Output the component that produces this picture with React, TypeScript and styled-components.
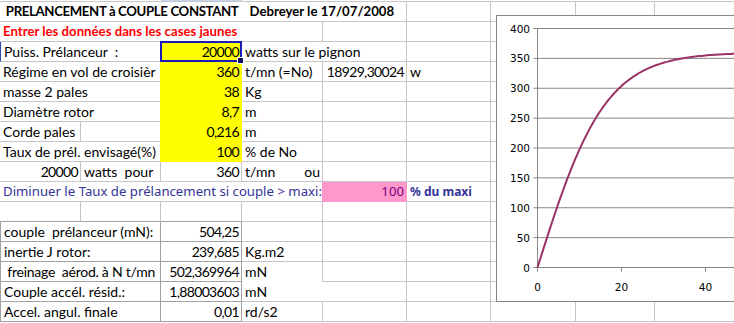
import React from 'react';
import styled, {createGlobalStyle} from 'styled-components';

const GRID = '#c6c6c6';
const FRAME = '#a2a2a2';
const YELLOW = '#ffff00';
const PINK = '#ff99cc';
const SELECT = '#1a1ab8';

const GlobalStyle = createGlobalStyle`
  html, body {
    margin: 0;
    padding: 0;
    background: #fff;
    overflow: hidden;
  }
`;

const Page = styled.div`
  position: relative;
  width: 734px;
  height: 323px;
  overflow: hidden;
  background: #fff;
  font-family: Lato, 'Liberation Sans', sans-serif;
`;

const COLUMNS = '81px 80px 81px 81px 84px 84px 85px 79px 85px';

const HeaderEdge = styled.div`
  display: grid;
  grid-template-columns: ${COLUMNS};
  height: 1px;
  width: 760px;
`;

const HeaderBit = styled.div<{$active?: boolean}>`
  background: ${p => (p.$active ? '#c4d4ec' : '#fff')};
`;

const Sheet = styled.div`
  border-top: 1px solid ${GRID};
  width: 760px;
`;

const Row = styled.div`
  display: grid;
  grid-template-columns: ${COLUMNS};
  height: 20px;
`;

type CellProps = {
  $span?: number;
  $align?: 'left' | 'right' | 'between';
  $fill?: string;
  $color?: string;
  $bold?: boolean;
  $num?: boolean;
  $tight?: boolean;
  $tahoma?: boolean;
  $right?: string;
  $bottom?: string;
  $left?: string;
};

const fontSize = (p: CellProps) => {
  if (p.$tahoma) return p.$bold ? '12px' : '13.2px';
  return p.$bold ? '13.2px' : '14px';
};

const spacing = (p: CellProps) => {
  if (p.$num) return '-0.65px';
  if (p.$tight) return '-0.25px';
  return 'normal';
};

const Cell = styled.div<CellProps>`
  grid-column: span ${p => p.$span ?? 1};
  position: relative;
  box-sizing: border-box;
  height: 20px;
  display: flex;
  align-items: flex-end;
  justify-content: ${p =>
    p.$align === 'right' ? 'flex-end' : p.$align === 'between' ? 'space-between' : 'flex-start'};
  padding: 0 2px 1px 3px;
  overflow: hidden;
  white-space: pre;
  background: ${p => p.$fill ?? 'transparent'};
  color: ${p => p.$color ?? '#000'};
  font-weight: ${p => (p.$bold ? 700 : 400)};
  font-family: ${p => (p.$tahoma ? "'Noto Sans', 'DejaVu Sans', sans-serif" : "Lato, 'Liberation Sans', sans-serif")};
  font-size: ${fontSize};
  letter-spacing: ${spacing};
  line-height: 17px;
  border-right: 1px solid ${p => p.$right ?? p.$fill ?? GRID};
  border-bottom: 1px solid ${p => p.$bottom ?? p.$fill ?? GRID};
  border-left: ${p => (p.$left ? `1px solid ${p.$left}` : 'none')};
  box-shadow: ${p => (p.$fill ? `-1px 0 0 ${p.$fill}` : 'none')};
`;

const Selected = styled(Cell)`
  overflow: visible;
  &::after {
    content: '';
    position: absolute;
    left: -1px;
    top: -1px;
    right: -1px;
    bottom: -1px;
    border: 2px solid ${SELECT};
    pointer-events: none;
  }
  &::before {
    content: '';
    position: absolute;
    right: -3px;
    bottom: -3px;
    width: 5px;
    height: 5px;
    background: #101060;
    border: 1px solid #fff;
    z-index: 1;
  }
`;

const TitleMain = styled.span`
  letter-spacing: -0.35px;
`;

const TitleDate = styled.span`
  margin-left: 11px;
`;

const Blank = ({n = 5}: {n?: number}) => (
  <>
    {Array.from({length: n}, (_, i) => (
      <Cell key={i} />
    ))}
  </>
);

/* ---------- chart ---------- */

const ChartBox = styled.div`
  position: absolute;
  left: 496px;
  top: 15px;
  width: 270px;
  height: 287px;
  box-sizing: border-box;
  border: 1px solid #868686;
  background: #fff;
`;

const ChartSvg = styled.svg`
  display: block;
  font-family: 'DejaVu Sans', Verdana, sans-serif;
  font-size: 10.5px;
`;

const X0 = 40.5;
const PX_PER_S = 4.2;
const Y0 = 251.5;
const PX_PER_UNIT = 29.875 / 50;

const curve = Array.from({length: 121}, (_, i) => {
  const t = i * 0.5;
  const n = 360 * Math.tanh(t / 16.2);
  return `${(X0 + t * PX_PER_S).toFixed(1)},${(Y0 - n * PX_PER_UNIT).toFixed(1)}`;
}).join(' ');

const Chart = () => {
  const yTicks = [0, 50, 100, 150, 200, 250, 300, 350, 400];
  const xTicks = [0, 20, 40];
  return (
    <ChartBox>
      <ChartSvg width={268} height={285}>
        {yTicks.map(v => {
          const y = Y0 - v * PX_PER_UNIT;
          return (
            <g key={v}>
              <line x1={X0 - 4} x2={268} y1={y} y2={y} stroke="#868686" strokeWidth={1} />
              <text x={33} y={y + 4} textAnchor="end" fill="#000">
                {v}
              </text>
            </g>
          );
        })}
        <line x1={X0} x2={X0} y1={Y0 - 400 * PX_PER_UNIT} y2={Y0} stroke="#868686" strokeWidth={1} />
        {xTicks.map(v => {
          const x = X0 + v * PX_PER_S;
          return (
            <g key={v}>
              <line x1={x} x2={x} y1={Y0} y2={Y0 + 4} stroke="#868686" strokeWidth={1} />
              <text x={x} y={275} textAnchor="middle" fill="#000">
                {v}
              </text>
            </g>
          );
        })}
        <polyline points={curve} fill="none" stroke="#993366" strokeWidth={2} strokeLinejoin="round" />
      </ChartSvg>
    </ChartBox>
  );
};

/* ---------- page ---------- */

const App = () => (
  <Page>
    <GlobalStyle />
    <HeaderEdge>
      <HeaderBit />
      <HeaderBit />
      <HeaderBit $active />
      <HeaderBit />
    </HeaderEdge>
    <Sheet>
      <Row>
        <Cell $span={5} $bold>
          <TitleMain>{' PRELANCEMENT à COUPLE CONSTANT'}</TitleMain>
          <TitleDate>Debreyer le 17/07/2008</TitleDate>
        </Cell>
        <Blank n={4} />
      </Row>
      <Row>
        <Cell $span={4} $bold $color="#ff0000">
          Entrer les données dans les cases jaunes
        </Cell>
        <Blank n={5} />
      </Row>
      <Row>
        <Cell $span={2} $left="#2a48b0">
          {'Puiss. Prélanceur  :'}
        </Cell>
        <Selected $fill={YELLOW} $align="right" $num>
          20000
        </Selected>
        <Cell $span={2}>watts sur le pignon</Cell>
        <Blank n={4} />
      </Row>
      <Row>
        <Cell $span={2}>Régime en vol de croisièr</Cell>
        <Cell $fill={YELLOW} $align="right" $num>
          360
        </Cell>
        <Cell>t/mn (=No)</Cell>
        <Cell $align="right" $num>
          18929,30024
        </Cell>
        <Cell>w</Cell>
        <Blank n={3} />
      </Row>
      <Row>
        <Cell $span={2}>masse 2 pales</Cell>
        <Cell $fill={YELLOW} $align="right" $num>
          38
        </Cell>
        <Cell>Kg</Cell>
        <Blank n={5} />
      </Row>
      <Row>
        <Cell $span={2}>Diamètre rotor</Cell>
        <Cell $fill={YELLOW} $align="right" $num>
          8,7
        </Cell>
        <Cell>m</Cell>
        <Blank n={5} />
      </Row>
      <Row>
        <Cell>Corde pales</Cell>
        <Cell />
        <Cell $fill={YELLOW} $align="right" $num>
          0,216
        </Cell>
        <Cell>m</Cell>
        <Blank n={5} />
      </Row>
      <Row>
        <Cell $span={2}>Taux de prél. envisagé(%)</Cell>
        <Cell $fill={YELLOW} $align="right" $num>
          100
        </Cell>
        <Cell>% de No</Cell>
        <Blank n={5} />
      </Row>
      <Row>
        <Cell $align="right" $num>
          20000
        </Cell>
        <Cell>{'watts  pour'}</Cell>
        <Cell $align="right" $num>
          360
        </Cell>
        <Cell $align="between">
          <span>t/mn</span>
          <span>ou</span>
        </Cell>
        <Blank n={5} />
      </Row>
      <Row>
        <Cell $span={4} $tahoma $color="#333399">
          Diminuer le Taux de prélancement si couple &gt; maxi:
        </Cell>
        <Cell $fill={PINK} $align="right" $tahoma $color="#800080">
          100
        </Cell>
        <Cell $tahoma $bold $color="#333399">
          % du maxi
        </Cell>
        <Blank n={3} />
      </Row>
      <Row>
        <Cell $bottom={FRAME} />
        <Cell $bottom={FRAME} />
        <Cell $bottom={FRAME} />
        <Blank n={6} />
      </Row>
      <Row>
        <Cell $span={2} $left={FRAME} $right={FRAME} $bottom={FRAME}>
          {'couple  prélanceur (mN):'}
        </Cell>
        <Cell $align="right" $num $right={FRAME} $bottom={FRAME}>
          504,25
        </Cell>
        <Blank n={6} />
      </Row>
      <Row>
        <Cell $span={2} $left={FRAME} $right={FRAME} $bottom={FRAME}>
          inertie J rotor:
        </Cell>
        <Cell $align="right" $num $right={FRAME} $bottom={FRAME}>
          239,685
        </Cell>
        <Cell>Kg.m2</Cell>
        <Blank n={5} />
      </Row>
      <Row>
        <Cell $span={2} $tight $left={FRAME} $right={FRAME} $bottom={FRAME}>
          {' freinage  aérod. à N t/mn'}
        </Cell>
        <Cell $align="right" $num $right={FRAME} $bottom={FRAME}>
          502,369964
        </Cell>
        <Cell $bottom="transparent">mN</Cell>
        <Blank n={5} />
      </Row>
      <Row>
        <Cell $span={2} $left={FRAME} $right={FRAME} $bottom={FRAME}>
          Couple accél. résid.:
        </Cell>
        <Cell $align="right" $num $right={FRAME} $bottom={FRAME}>
          1,88003603
        </Cell>
        <Cell $right="transparent">mN</Cell>
        <Blank n={5} />
      </Row>
      <Row>
        <Cell $span={2} $left={FRAME} $right={FRAME} $bottom={FRAME}>
          Accel. angul. finale
        </Cell>
        <Cell $align="right" $num $right={FRAME} $bottom={FRAME}>
          0,01
        </Cell>
        <Cell>rd/s2</Cell>
        <Blank n={5} />
      </Row>
    </Sheet>
    <Chart />
  </Page>
);

export default App;
